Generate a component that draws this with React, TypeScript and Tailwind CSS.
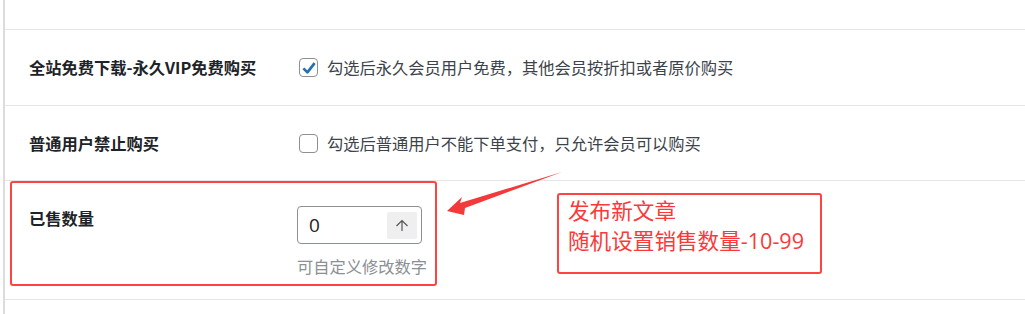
import React from 'react';

const cjk = { fontFamily: '"Microsoft YaHei", "Noto Sans CJK SC", "Noto Sans", sans-serif' };
const mixed = { fontFamily: '"Open Sans", "Noto Sans CJK SC", sans-serif' };

function Checkbox({ checked }: { checked: boolean }) {
  return (
    <span className="w-[19px] h-[19px] shrink-0 rounded-[4px] border border-[#8c8f94] bg-white flex items-center justify-center">
      {checked && (
        <svg width="16" height="16" viewBox="0 0 20 20">
          <path d="M3 10.5 L8 15.5 L17 4" fill="none" stroke="#2271b1" strokeWidth="3.4" strokeLinejoin="round" />
        </svg>
      )}
    </span>
  );
}

function App() {
  return (
    <div className="relative w-[1025px] h-[314px] bg-white overflow-hidden text-[16.25px]" style={cjk}>
      <div className="ml-[3px] h-full border-l-2 border-[#dcdcde]">
        {/* empty top row */}
        <div className="h-[30px] border-b border-[#e6e6e6]" />

        <div className="h-[76px] flex items-center border-b border-[#e6e6e6]">
          <div className="w-[294px] pl-[24px] font-bold text-[#1d2327]">全站免费下载-永久VIP免费购买</div>
          <label className="flex items-center gap-[9px] text-[#3c434a]">
            <Checkbox checked />
            <span>勾选后永久会员用户免费，其他会员按折扣或者原价购买</span>
          </label>
        </div>

        <div className="h-[75px] flex items-center border-b border-[#e6e6e6]">
          <div className="w-[294px] pl-[24px] font-bold text-[#1d2327]">普通用户禁止购买</div>
          <label className="flex items-center gap-[9px] text-[#3c434a]">
            <Checkbox checked={false} />
            <span>勾选后普通用户不能下单支付，只允许会员可以购买</span>
          </label>
        </div>

        <div className="h-[119px] flex border-b border-[#e6e6e6]">
          <div className="w-[292px] pl-[24px] pt-[25px] font-bold text-[#1d2327]">已售数量</div>
          <div className="pt-[25px]">
            <div className="w-[125px] h-[38px] rounded-[4px] border border-[#8c8f94] flex items-center justify-between pl-[11px] pr-[4px]">
              <span className="text-[19px] text-[#1d2327]" style={{ fontFamily: '"Open Sans", sans-serif' }}>0</span>
              <span className="w-[30px] h-[27px] rounded-[2px] bg-[#efefef] flex items-center justify-center">
                <svg width="14" height="14" viewBox="0 0 14 14">
                  <path d="M1.5 8 L7 2.5 L12.5 8 M7 2.5 V13" fill="none" stroke="#50575e" strokeWidth="1.2" />
                </svg>
              </span>
            </div>
            <div className="mt-[10px] text-[#8c8f94]">可自定义修改数字</div>
          </div>
        </div>
      </div>

      {/* annotations */}
      <div className="absolute left-[10px] top-[181px] w-[427px] h-[105px] border-2 border-[#ff4242] rounded-[3px]" />
      <svg className="absolute left-0 top-0" width="1025" height="314">
        <polygon points="447,211 462,197 460,203 562,172 465,208 464,215" fill="#f23a3a" />
      </svg>
      <div className="absolute left-[557px] top-[193px] w-[265px] h-[81px] border-2 border-[#ff4242] rounded-[3px] pl-[9px] pt-[1px] text-[21.6px] leading-[30px] text-[#f83a3a]" style={mixed}>
        <div>发布新文章</div>
        <div>随机设置销售数量-10-99</div>
      </div>
    </div>
  );
}

export default App;
